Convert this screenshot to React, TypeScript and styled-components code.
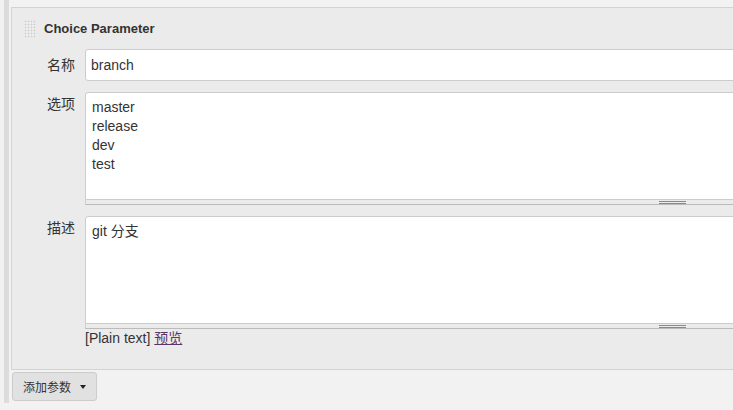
import React from "react";
import styled, { createGlobalStyle } from "styled-components";

const Global = createGlobalStyle`
  html, body {
    margin: 0;
    padding: 0;
    background: #f2f2f2;
    overflow: hidden;
  }
  body {
    font-family: "Liberation Sans", Arial, "Noto Sans CJK SC", sans-serif;
    color: #333;
  }
`;

const FONT = `"Liberation Sans", Arial, "Noto Sans CJK SC", sans-serif`;

const Wrapper = styled.div`
  margin-left: 4px;
  border-left: 5px solid #dcdcdc;
  padding: 7px 0 2px 2px;
  width: 1400px;
`;

const Section = styled.div`
  width: 1300px;
  border: 1px solid #d3d3d3;
  background: #ebebeb;
  padding: 12px 0 21px 12px;
`;

const Header = styled.div`
  display: flex;
  align-items: center;
  gap: 8px;
  height: 18px;
  margin-bottom: 11px;
`;

const Handle = styled.svg`
  display: block;
  flex: none;
`;

const Title = styled.div`
  font-family: ${FONT};
  font-weight: bold;
  font-size: 13px;
  line-height: 18px;
  color: #333;
`;

const Row = styled.div<{ $center?: boolean }>`
  display: grid;
  grid-template-columns: 51px 1175px;
  column-gap: 10px;
  align-items: ${(p) => (p.$center ? "center" : "start")};
  margin-bottom: 11px;
  &:last-child {
    margin-bottom: 0;
  }
`;

const Label = styled.div<{ $top?: number }>`
  text-align: right;
  font-family: ${FONT};
  font-size: 14px;
  line-height: 19px;
  color: #333;
  padding-top: ${(p) => p.$top ?? 0}px;
`;

const TextInput = styled.input`
  box-sizing: border-box;
  display: block;
  width: 100%;
  height: 32px;
  border: 1px solid #ccc;
  border-radius: 3px;
  background: #fff;
  padding: 0 5px;
  margin: 0;
  font-family: ${FONT};
  font-size: 14px;
  color: #333;
  outline: none;
`;

const AreaWrap = styled.div`
  display: flex;
  flex-direction: column;
`;

const TextArea = styled.textarea`
  box-sizing: border-box;
  display: block;
  width: 100%;
  height: 108px;
  border: 1px solid #ccc;
  border-radius: 3px 3px 0 0;
  background: #fff;
  padding: 5px 6px 4px;
  margin: 0;
  resize: none;
  font-family: ${FONT};
  font-size: 14px;
  line-height: 19px;
  color: #333;
  outline: none;
  overflow: hidden;
`;

const Grip = styled.div`
  box-sizing: border-box;
  height: 5px;
  border: 1px solid #cfcfcf;
  border-top: none;
  border-bottom-color: #bbb;
  background: #ebebeb;
  display: flex;
  justify-content: center;
  align-items: center;
`;

const GripLines = styled.div`
  width: 27px;
  height: 3px;
  border-top: 1px solid #8a8a8a;
  border-bottom: 1px solid #8a8a8a;
  box-sizing: border-box;
`;

const Hint = styled.div`
  font-family: ${FONT};
  font-size: 14px;
  line-height: 19px;
  color: #333;
`;

const PreviewLink = styled.a`
  color: #5c3566;
  text-decoration: underline;
  cursor: pointer;
`;

const Button = styled.button`
  box-sizing: border-box;
  margin: 2px 0 0 1px;
  height: 29px;
  width: 85px;
  display: flex;
  align-items: center;
  gap: 9px;
  padding: 0 0 0 10px;
  border: 1px solid #ccc;
  border-radius: 3px;
  background: #e1e1e1;
  font-family: ${FONT};
  font-size: 12px;
  color: #333;
  cursor: pointer;
`;

const Caret = styled.span`
  width: 0;
  height: 0;
  border-left: 3.5px solid transparent;
  border-right: 3.5px solid transparent;
  border-top: 4px solid #222;
`;

function DragHandle() {
  const dots: React.ReactNode[] = [];
  for (let r = 0; r < 6; r++) {
    for (let c = 0; c < 4; c++) {
      dots.push(<rect key={`${r}-${c}`} x={c * 3 + 0.5} y={r * 3 + 0.5} width={2} height={2} fill="#cdcdcd" />);
    }
  }
  return (
    <Handle width={12} height={18} viewBox="0 0 12 18">
      <rect x={0} y={0} width={12} height={18} fill="#f7f7f7" />
      {dots}
    </Handle>
  );
}

export default function App() {
  return (
    <>
      <Global />
      <Wrapper>
        <Section>
          <Header>
            <DragHandle />
            <Title>Choice Parameter</Title>
          </Header>
          <Row $center>
            <Label>名称</Label>
            <TextInput readOnly defaultValue="branch" />
          </Row>
          <Row>
            <Label $top={3}>选项</Label>
            <AreaWrap>
              <TextArea readOnly defaultValue={"master\nrelease\ndev\ntest"} />
              <Grip>
                <GripLines />
              </Grip>
            </AreaWrap>
          </Row>
          <Row>
            <Label $top={3}>描述</Label>
            <AreaWrap>
              <TextArea readOnly defaultValue="git 分支" />
              <Grip>
                <GripLines />
              </Grip>
              <Hint>
                [Plain text] <PreviewLink>预览</PreviewLink>
              </Hint>
            </AreaWrap>
          </Row>
        </Section>
        <Button>
          添加参数
          <Caret />
        </Button>
      </Wrapper>
    </>
  );
}
